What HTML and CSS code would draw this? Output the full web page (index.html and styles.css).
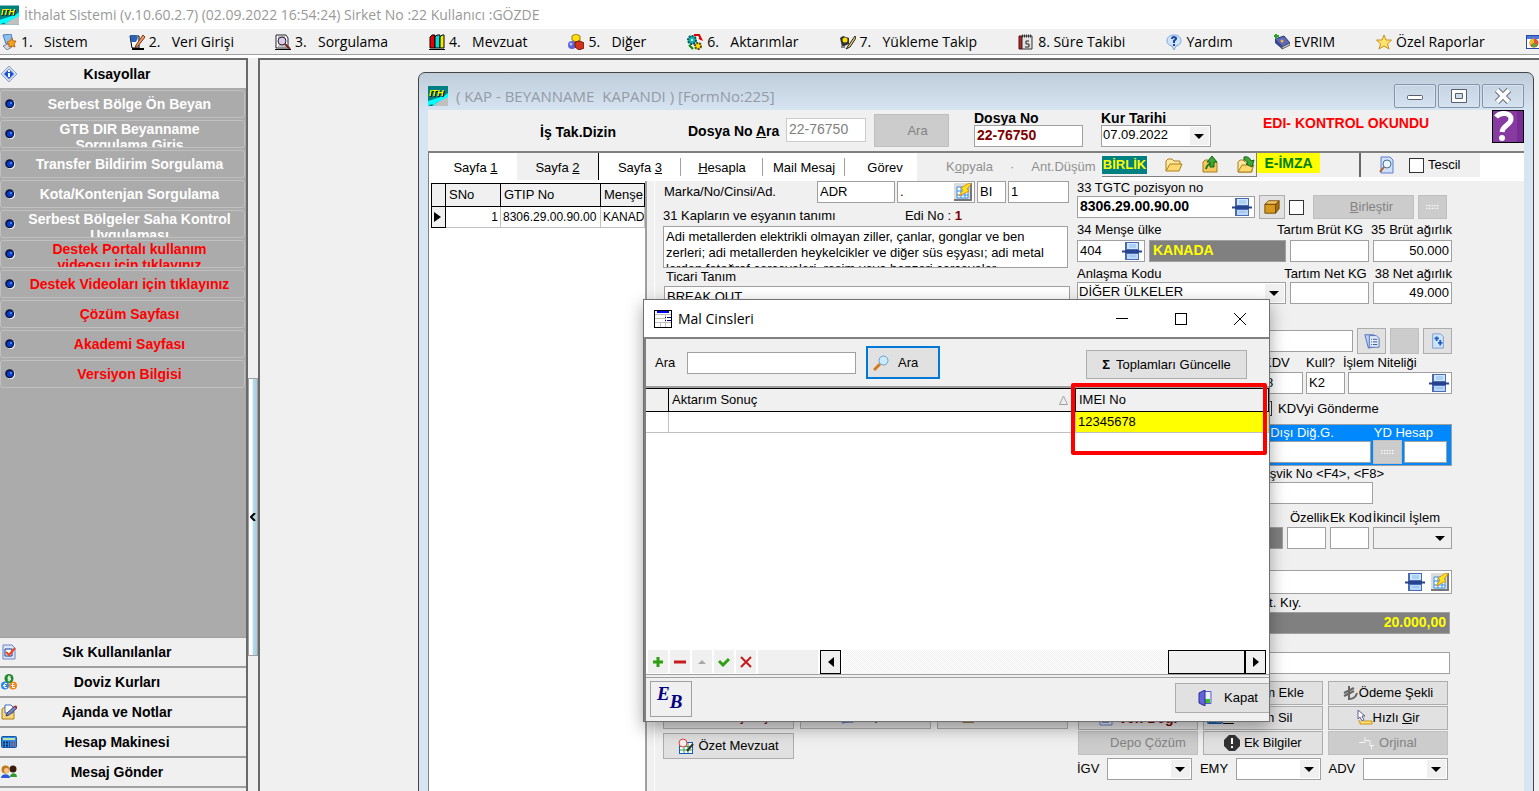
FILE: index.html
```html
<!DOCTYPE html>
<html lang="tr">
<head>
    <meta charset="UTF-8">
    <meta name="viewport" content="width=device-width, initial-scale=1.0">
    <title>İthalat Sistemi</title>
    <link rel="stylesheet" href="styles.css">
</head>
<body>
    <!-- Icon set -->
    <svg class="defs" width="0" height="0" aria-hidden="true">
        <symbol id="i-ith" viewBox="0 0 20 20">
            <rect width="20" height="20" fill="#008080"/>
            <path d="M4 20L20 9V20z" fill="#c0c0c0"/>
            <path d="M0 15L16 10L20 7V11L8 17L7 20L4 18L0 20z" fill="#0ff"/>
            <text x="2" y="11" font-family="Liberation Sans" font-size="9" font-weight="700" font-style="italic" fill="#000">ITH</text>
            <text x="1" y="10" font-family="Liberation Sans" font-size="9" font-weight="700" font-style="italic" fill="#ff0">ITH</text>
        </symbol>
        <symbol id="i-system" viewBox="0 0 16 16">
            <path d="M2 1l8-1 2 8-7 2z" fill="#8ec2ee" stroke="#4a7db8"/>
            <path d="M2 12l5-2 4 3-5 3z" fill="#d5d9e2" stroke="#7a8296"/>
            <path d="M11 4l1 3 3 0-2 3 1 3-3-1-3 1 0-3-2-2 3-1z" fill="#f9a020" stroke="#c06a10"/>
        </symbol>
        <symbol id="i-entry" viewBox="0 0 16 16">
            <path d="M1 2h9v12H3z" fill="#fff" stroke="#000"/>
            <path d="M1 1h6l2 3-2 4H2z" fill="#2a62b4"/>
            <path d="M3 15h12" stroke="#000" stroke-width="2"/>
            <path d="M14 1L7 11l-1 3 3-2 7-9z" fill="#e8a070" stroke="#803010"/>
        </symbol>
        <symbol id="i-query" viewBox="0 0 16 16">
            <path d="M1 1h10l2 3v10H1z" fill="#fff" stroke="#223"/>
            <path d="M3 3h7M3 12h8" stroke="#888"/>
            <circle cx="7" cy="7" r="4" fill="#dcc8ec" stroke="#222"/>
            <path d="M10 10l5 5" stroke="#722" stroke-width="2"/>
            <path d="M0 15.500h16" stroke="#000"/>
        </symbol>
        <symbol id="i-books" viewBox="0 0 16 16">
            <path d="M1 3l2-2h3v13H1z" fill="#e00" stroke="#000"/>
            <path d="M6 3l2-2h3v13H6z" fill="#0dd" stroke="#000"/>
            <path d="M11 3l2-2h2v13h-4z" fill="#ee0" stroke="#000"/>
            <path d="M0 15.500h16" stroke="#000"/>
        </symbol>
        <symbol id="i-shapes" viewBox="0 0 16 16">
            <path d="M8 0l4 2v4L8 8 4 6V2z" fill="#ffdf10" stroke="#a07800"/>
            <circle cx="4" cy="11" r="4" fill="#5763d8"/>
            <circle cx="3" cy="10" r="1.500" fill="#b7bcf8"/>
            <path d="M7 8l5-1 4 2v5l-5 2-4-3z" fill="#d33218" stroke="#761405"/>
        </symbol>
        <symbol id="i-gears" viewBox="0 0 16 16">
            <circle cx="5" cy="6" r="4" fill="#15b3b0" stroke="#055" stroke-width="2" stroke-dasharray="2 1"/>
            <circle cx="5" cy="6" r="1" fill="#fff"/>
            <circle cx="11" cy="12" r="3" fill="#ffe000" stroke="#554400" stroke-width="2" stroke-dasharray="2 1"/>
            <path d="M7 1h5l2 4-2-1" fill="none" stroke="#d00" stroke-width="2"/>
            <path d="M2 11l4 4" stroke="#080" stroke-width="2"/>
        </symbol>
        <symbol id="i-truck" viewBox="0 0 16 16">
            <path d="M0 4l3-2 6 2v6l-7 3z" fill="#333"/>
            <circle cx="5" cy="6" r="2.500" fill="#ffe200"/>
            <path d="M15 2L8 12l-2 3 4-2 6-9z" fill="#e5cf60" stroke="#222"/>
            <path d="M1 13h4" stroke="#888" stroke-width="2"/>
        </symbol>
        <symbol id="i-calendar" viewBox="0 0 16 16">
            <path d="M1 2h3v13H1z" fill="#b22" stroke="#511"/>
            <path d="M4 2h10v13H4z" fill="#e2e2e2" stroke="#333"/>
            <path d="M4 2h10" stroke="#333" stroke-width="3" stroke-dasharray="1 1"/>
            <path d="M11 7H8v3h3v3H7" fill="none" stroke="#222"/>
        </symbol>
        <symbol id="i-help" viewBox="0 0 16 16">
            <path d="M8 1c9 0 9 10 2 11l-2 4-2-4C-1 11-1 1 8 1z" fill="#cfe3fb" stroke="#7ca6de"/>
            <path d="M6 5c0-3 5-2 4 0L8 7v2M8 10v2" fill="none" stroke="#17459c" stroke-width="2"/>
        </symbol>
        <symbol id="i-book" viewBox="0 0 16 16">
            <path d="M1 5l9-3 6 7-8 4z" fill="#5b69b8" stroke="#2b3474"/>
            <path d="M1 5v4l7 6v-3z" fill="#39468e"/>
            <path d="M8 13v2l8-4V9z" fill="#e9e9f4" stroke="#555"/>
            <circle cx="8" cy="7" r="1.500" fill="#f9b233"/>
            <path d="M0 2h5M2 0v5" stroke="#2da12d" stroke-width="2"/>
        </symbol>
        <symbol id="i-star" viewBox="0 0 16 16">
            <path d="M8 1l2 5 5.500 0-4 4 1.500 5-5-3-5 3 1.500-5-4-4H6z" fill="#ffe36a" stroke="#c8901a"/>
        </symbol>
        <symbol id="i-chart" viewBox="0 0 16 16">
            <rect x="0.500" y="1.500" width="15" height="13" fill="#fff" stroke="#2746a8"/>
            <rect x="1" y="2" width="14" height="3" fill="#4e77d6"/>
            <circle cx="8" cy="9" r="4.500" fill="#e35532"/>
            <path d="M8 9V4.500A4.500 4.500 0 0 0 4 11z" fill="#e8c02a"/>
            <path d="M8 9l4 2a4.500 4.500 0 0 1-7 1z" fill="#5aa53c"/>
        </symbol>
        <symbol id="i-info" viewBox="0 0 16 16">
            <path d="M8 0l8 8-8 8-8-8z" fill="#cfdcf0" stroke="#8fa4c8"/>
            <path d="M8 3l5 5-5 5-5-5z" fill="#1d53c8"/>
            <path d="M8 4v2M8 7v4" stroke="#fff" stroke-width="2"/>
        </symbol>
        <symbol id="i-ball" viewBox="0 0 10 10">
            <circle cx="5.500" cy="5.500" r="4.500" fill="#fff"/>
            <circle cx="4.700" cy="4.700" r="4.500" fill="#0a1440"/>
            <circle cx="5" cy="5" r="3" fill="#0b3cc8"/>
            <circle cx="6" cy="4" r="1" fill="#52a0ff"/>
        </symbol>
        <symbol id="i-check" viewBox="0 0 16 16">
            <path d="M2 1h9l3 3v11H2z" fill="#dbe7fb" stroke="#6d82c4"/>
            <path d="M4 5h7v7H4z" fill="#fff" stroke="#12368e"/>
            <path d="M5 8l3 3 6-7" fill="none" stroke="#f0421c" stroke-width="2"/>
        </symbol>
        <symbol id="i-coins" viewBox="0 0 16 16">
            <circle cx="4" cy="11.500" r="4" fill="#2f86e4"/>
            <circle cx="12" cy="11.500" r="4" fill="#f28418"/>
            <circle cx="8" cy="4.500" r="4.500" fill="#1d8a28"/>
            <path d="M10 3H7v1.500h2.500V6H6.500M8 1.500V7.500" fill="none" stroke="#fff"/>
            <path d="M6 9.500H4L3 11v2l3 1M2 11.500h3M13 9.500h-1.500v4H14M10.500 11.500h3" fill="none" stroke="#fff"/>
        </symbol>
        <symbol id="i-notes" viewBox="0 0 16 16">
            <path d="M1 5l3-2h9v12H1z" fill="#f6d77a" stroke="#a87c18"/>
            <path d="M4 1h6l2 2v6H4z" fill="#fff" stroke="#3d6cc0"/>
            <path d="M5 12l1-3 8-7 2 2-8 7z" fill="#7b8ad0" stroke="#39406f"/>
            <path d="M14 2l2 2" stroke="#d02010" stroke-width="2"/>
        </symbol>
        <symbol id="i-calc" viewBox="0 0 16 16">
            <rect x="0.500" y="2.500" width="15" height="11" rx="1" fill="#2a8ce8" stroke="#1457a8"/>
            <path d="M2 5h12" stroke="#bfe4a8" stroke-width="2"/>
            <path d="M2 8.500h7M2 11.500h7" stroke="#0c2c60" stroke-width="2" stroke-dasharray="2 1"/>
            <path d="M10 8.500h4M10 11.500h4" stroke="#b5443c" stroke-width="2" stroke-dasharray="2 1"/>
        </symbol>
        <symbol id="i-people" viewBox="0 0 16 16">
            <circle cx="12" cy="5" r="3.500" fill="#3a1a0a"/>
            <path d="M9 13c0-5 7-5 7 0z" fill="#2c9a2c"/>
            <circle cx="4.500" cy="5.500" r="4" fill="#c07a1c"/>
            <circle cx="5.500" cy="6.500" r="2.500" fill="#f8c48c"/>
            <path d="M0 14c0-5 9-5 9 0z" fill="#2a58e0"/>
        </symbol>
        <symbol id="i-folder" viewBox="0 0 18 16">
            <path d="M1 14V4l2-2h4l2 2h6v3" fill="#ffe9a0" stroke="#a9801c"/>
            <path d="M1 14l4-7h12l-3 7z" fill="#ffd970" stroke="#a9801c"/>
        </symbol>
        <symbol id="i-folderup" viewBox="0 0 18 18">
            <path d="M2 16V6l2-2h3l2 2h7v10z" fill="#f6c75c" stroke="#a9801c"/>
            <path d="M5 13c1-4 2-5 5-5" fill="none" stroke="#187818" stroke-width="2"/>
            <path d="M6 6l5-6 5 6h-3v5H9V6z" fill="#3ca838" stroke="#0f6414"/>
        </symbol>
        <symbol id="i-folderin" viewBox="0 0 18 18">
            <path d="M1 16V6l2-2h3l2 2h7v10z" fill="#ffe9a0" stroke="#a9801c"/>
            <path d="M1 16l4-7h12l-3 7z" fill="#ffd970" stroke="#a9801c"/>
            <path d="M7 1c4-1 6 1 7 4l3-1-2 7-6-3 2-1c-1-2-2-3-4-3z" fill="#3ca838" stroke="#0f6414"/>
        </symbol>
        <symbol id="i-preview" viewBox="0 0 16 18">
            <path d="M2 1h9l3 3v13H2z" fill="#cfe0fb" stroke="#5d7ccc"/>
            <circle cx="8" cy="8" r="4" fill="#e6f7ff" stroke="#4a6a90"/>
            <path d="M5 11l-4 5" stroke="#b55c28" stroke-width="2"/>
        </symbol>
        <symbol id="i-lookup" viewBox="0 0 20 20">
            <rect x="3" y="1" width="14" height="18" fill="#4a6ab8"/>
            <rect x="5" y="2" width="11" height="6" fill="#cde8fc"/>
            <rect x="5" y="13" width="11" height="5" fill="#b9d8f8"/>
            <path d="M7 4h7M7 6h7M7 15h7" stroke="#8cb8ec"/>
            <path d="M0 10.500h20" stroke="#26438c" stroke-width="2"/>
            <rect x="3" y="9" width="14" height="3" fill="#26438c"/>
        </symbol>
        <symbol id="i-flash" viewBox="0 0 18 18">
            <rect width="18" height="18" fill="#dcdcdc"/>
            <path d="M17 0v17H0" fill="none" stroke="#777" stroke-width="2"/>
            <path d="M3 4h11v11H3z" fill="#fff" stroke="#2f8fe6"/>
            <path d="M3 8h11M3 12h11M7 4v11M11 4v11" stroke="#2f8fe6"/>
            <path d="M15 0l-8 5 2 2-4 6 10-5-2-2 4-5z" fill="#ffe31a" stroke="#e0901a"/>
        </symbol>
        <symbol id="i-box" viewBox="0 0 18 16">
            <path d="M1 5l4-4h12l-4 4z" fill="#f7c766" stroke="#6d4600"/>
            <path d="M1 5h12v10H1z" fill="#d99a1c" stroke="#6d4600"/>
            <path d="M13 5l4-4v9l-4 5z" fill="#a8700c" stroke="#6d4600"/>
        </symbol>
        <symbol id="i-list" viewBox="0 0 18 18">
            <path d="M1 2h10l2 3v10l-8 2z" fill="#bcd2f6" stroke="#4a68b4"/>
            <path d="M6 3h8l3 3v10H6z" fill="#e4effd" stroke="#4a68b4"/>
            <path d="M8 7h1M10 7h5M8 10h1M10 10h5M8 13h1M10 13h5" stroke="#2a4690"/>
        </symbol>
        <symbol id="i-plusdoc" viewBox="0 0 16 18">
            <path d="M2 1h9l3 3v13H2z" fill="#cfe4fb" stroke="#7796cc"/>
            <path d="M4 6h5M6.500 4v5M8 11h5M10.500 8v6" stroke="#1c62c0" stroke-width="2"/>
        </symbol>
        <symbol id="i-dots" viewBox="0 0 12 6">
            <path d="M1 2h10M1 4h10" stroke="#fff" stroke-dasharray="1 1"/>
        </symbol>
        <symbol id="i-lira" viewBox="0 0 16 16">
            <path d="M6 1v13c5 0 7-2 8-6M1 8l10-5M1 11l10-5" fill="none" stroke="#666" stroke-width="2"/>
        </symbol>
        <symbol id="i-cursor" viewBox="0 0 16 16">
            <path d="M1 11h2v3h12v-3H7" fill="#ffe36a" stroke="#c8901a"/>
            <path d="M1 0v9l2-2 2 4 2-1-2-4h3z" fill="#fff" stroke="#5e5c98"/>
        </symbol>
        <symbol id="i-alert" viewBox="0 0 16 16">
            <path d="M5 0h6l5 5v6l-5 5H5l-5-5V5z" fill="#333"/>
            <path d="M8 3v6M8 11v2" stroke="#fff" stroke-width="2"/>
        </symbol>
        <symbol id="i-route" viewBox="0 0 16 16">
            <path d="M0 7.500h6V2M7 5.500h4v5h4M12.500 10v4" fill="none" stroke="#f4f4f4"/>
        </symbol>
        <symbol id="i-digest" viewBox="0 0 16 16">
            <rect x="1.500" y="4.500" width="13" height="11" fill="#fff" stroke="#1559c4"/>
            <path d="M2 8.500h12M2 12h12M6 5v10M10 5v10" stroke="#2ca23c"/>
            <circle cx="5" cy="5" r="4" fill="#fdeeee" stroke="#e04444"/>
            <path d="M9 13l6-7" stroke="#333" stroke-width="2"/>
        </symbol>
        <symbol id="i-grid" viewBox="0 0 18 18">
            <rect x="0.500" y="0.500" width="17" height="17" fill="#fff" stroke="#000"/>
            <rect x="3" y="1" width="12" height="2" fill="#00f"/>
            <path d="M1 4.500h16M1 8.500h10M1 12.500h16M6.500 13v4M11.500 4v13" stroke="#c0c0c0"/>
            <path d="M11 7.500h1M13 7.500h4M11 10.500h1M13 10.500h4" stroke="#000080"/>
        </symbol>
        <symbol id="i-search" viewBox="0 0 16 16">
            <path d="M1 15l6-6" stroke="#d8781c" stroke-width="3"/>
            <circle cx="10.500" cy="5.500" r="4.500" fill="#c8ecfc" stroke="#6a9cc8"/>
        </symbol>
        <symbol id="i-door" viewBox="0 0 14 16">
            <path d="M5 1.500h8v12H5z" fill="#e8f0ff" stroke="#5a5ad0"/>
            <path d="M7 9h5v4H7z" fill="#38c028"/>
            <path d="M1 3l6-3v16l-6-3z" fill="#6262dc" stroke="#2c2c90"/>
        </symbol>
    </svg>

    <header class="app-title">
        <svg width="19" height="20"><use href="#i-ith"/></svg>
        <span>İthalat Sistemi (v.10.60.2.7) (02.09.2022 16:54:24) Sirket No :22 Kullanıcı :GÖZDE</span>
    </header>

    <nav class="menu">
        <button><svg><use href="#i-system"/></svg><span class="no">1.</span>Sistem</button>
        <button><svg><use href="#i-entry"/></svg><span class="no">2.</span>Veri Girişi</button>
        <button><svg><use href="#i-query"/></svg><span class="no">3.</span>Sorgulama</button>
        <button><svg><use href="#i-books"/></svg><span class="no">4.</span>Mevzuat</button>
        <button><svg><use href="#i-shapes"/></svg><span class="no">5.</span>Diğer</button>
        <button><svg><use href="#i-gears"/></svg><span class="no">6.</span>Aktarımlar</button>
        <button><svg><use href="#i-truck"/></svg><span class="no">7.</span>Yükleme Takip</button>
        <button><svg><use href="#i-calendar"/></svg>8. Süre Takibi</button>
        <button><svg><use href="#i-help"/></svg>Yardım</button>
        <button><svg><use href="#i-book"/></svg>EVRIM</button>
        <button><svg><use href="#i-star"/></svg>Özel Raporlar</button>
        <button aria-label="Grafik"><svg><use href="#i-chart"/></svg></button>
    </nav>

    <div class="workspace">
        <aside class="sidebar">
            <button class="group first"><svg><use href="#i-info"/></svg><span>Kısayollar</span></button>
            <div class="shortcuts">
                <button><svg><use href="#i-ball"/></svg><span>Serbest Bölge Ön Beyan</span></button>
                <button><svg><use href="#i-ball"/></svg><span>GTB DIR Beyanname Sorgulama Giriş</span></button>
                <button><svg><use href="#i-ball"/></svg><span>Transfer Bildirim Sorgulama</span></button>
                <button><svg><use href="#i-ball"/></svg><span>Kota/Kontenjan Sorgulama</span></button>
                <button><svg><use href="#i-ball"/></svg><span>Serbest Bölgeler Saha Kontrol Uygulaması</span></button>
                <button class="red"><svg><use href="#i-ball"/></svg><span>Destek Portalı kullanım videosu için tıklayınız</span></button>
                <button class="red"><svg><use href="#i-ball"/></svg><span>Destek Videoları için tıklayınız</span></button>
                <button class="red"><svg><use href="#i-ball"/></svg><span>Çözüm Sayfası</span></button>
                <button class="red"><svg><use href="#i-ball"/></svg><span>Akademi Sayfası</span></button>
                <button class="red"><svg><use href="#i-ball"/></svg><span>Versiyon Bilgisi</span></button>
            </div>
            <button class="group"><svg><use href="#i-check"/></svg><span>Sık Kullanılanlar</span></button>
            <button class="group"><svg><use href="#i-coins"/></svg><span>Doviz Kurları</span></button>
            <button class="group"><svg><use href="#i-notes"/></svg><span>Ajanda ve Notlar</span></button>
            <button class="group"><svg><use href="#i-calc"/></svg><span>Hesap Makinesi</span></button>
            <button class="group"><svg><use href="#i-people"/></svg><span>Mesaj Gönder</span></button>
            <div class="rest"></div>
        </aside>
        <div class="splitter"><button aria-label="Daralt"><svg width="6" height="8" viewBox="0 0 6 8"><path d="M5 0L1 4l4 4" fill="none" stroke="#000" stroke-width="2"/></svg></button></div>

        <main class="desktop">
            <!-- Declaration window -->
            <section class="window">
                <div class="window-head">
                    <svg width="20" height="20"><use href="#i-ith"/></svg>
                    <h1>( KAP - BEYANNAME&nbsp; KAPANDI ) [FormNo:225]</h1>
                    <button aria-label="Simge durumu"><svg width="18" height="18"><rect x="1.500" y="8.500" width="15" height="4" rx="1" fill="#fff" stroke="#555f70"/></svg></button>
                    <button aria-label="Büyüt"><svg width="18" height="18"><path d="M1.500 2.500h15v13h-15z M5.500 6.500h7v5h-7z" fill="#fff" fill-rule="evenodd" stroke="#555f70"/></svg></button>
                    <button aria-label="Pencereyi kapat"><svg width="18" height="18"><path d="M3 3l12 12M15 3L3 15" stroke="#555f70" stroke-width="6"/><path d="M3 3l12 12M15 3L3 15" stroke="#fff" stroke-width="4"/></svg></button>
                </div>
                <div class="window-body">
                    <div class="file-bar">
                        <b class="is-tak">İş Tak.Dizin</b>
                        <label class="find-label" for="find">Dosya No <u>A</u>ra</label>
                        <input class="find" id="find" value="22-76750" disabled>
                        <button class="find-btn" disabled>Ara</button>
                        <div class="stack dosya"><label for="dosya">Dosya No</label><input id="dosya" value="22-76750"></div>
                        <div class="stack kur"><label for="kur">Kur Tarihi</label><span class="select"><select id="kur"><option>07.09.2022</option></select></span></div>
                        <b class="edi">EDI- KONTROL OKUNDU</b>
                        <button class="help" aria-label="Yardım"><svg width="30" height="31" viewBox="0 0 30 31"><path d="M24 0h6v31h-6z" fill="#7a2a94"/><path d="M3 6c4-5 15-5 15 2 0 6-8 6-9 13" fill="none" stroke="#fff" stroke-width="5"/><circle cx="9" cy="27" r="3" fill="#fff"/></svg></button>
                    </div>

                    <div class="tabs">
                        <button class="tab">Sayfa <u>1</u></button>
                        <button class="tab active">Sayfa <u>2</u></button>
                        <button class="tab">Sayfa <u>3</u></button>
                        <button class="tab"><u>H</u>esapla</button>
                        <button class="tab">Mail Mesaj</button>
                        <button class="tab last">Görev</button>
                        <div class="tools-off"><button disabled>K<u>o</u>pyala</button><span>·</span><button disabled>Ant.Düşüm</button></div>
                        <div class="tools">
                            <button class="birlik">BİRLİK</button>
                            <button aria-label="Aç"><svg width="18" height="16"><use href="#i-folder"/></svg></button>
                            <button aria-label="Dışarı"><svg width="18" height="18"><use href="#i-folderup"/></svg></button>
                            <button aria-label="İçeri"><svg width="18" height="18"><use href="#i-folderin"/></svg></button>
                        </div>
                        <div class="imza"><button>E-İMZA</button></div>
                        <div class="tescil">
                            <svg width="16" height="18"><use href="#i-preview"/></svg>
                            <label><input type="checkbox">Tescil</label>
                        </div>
                    </div>

                    <div class="page">
                        <div class="items">
                            <table>
                                <thead><tr><th class="mark"></th><th class="sno">SNo</th><th class="gtip">GTIP No</th><th>Menşe</th></tr></thead>
                                <tbody><tr><td class="mark"><svg width="8" height="10"><path d="M0 0l7 5-7 5z"/></svg></td><td class="num">1</td><td>8306.29.00.90.00</td><td>KANADA</td></tr></tbody>
                            </table>
                        </div>

                        <div class="form">
                            <div class="goods">
                                <div class="row marka">
                                    <label for="marka">Marka/No/Cinsi/Ad.</label>
                                    <input class="w78" id="marka" value="ADR">
                                    <span class="field w78"><input aria-label="No" value="."><button aria-label="Seç"><svg width="18" height="18"><use href="#i-flash"/></svg></button></span>
                                    <input class="w29" aria-label="Cins" value="BI">
                                    <input class="grow" aria-label="Adet" value="1">
                                </div>
                                <div class="row lab edino"><label for="tanim">31 Kapların ve eşyanın tanımı</label><span>Edi No : <b>1</b></span></div>
                                <textarea id="tanim">Adi metallerden elektrikli olmayan ziller, çanlar, gonglar ve ben
zerleri; adi metallerden heykelcikler ve diğer süs eşyası; adi metal
lerden fotoğraf çerçeveleri, resim veya benzeri çerçeveler</textarea>
                                <label class="row lab18 inset" for="ticari">Ticari Tanım</label>
                                <input class="full" id="ticari" value="BREAK OUT">
                                <div class="goods-buttons">
                                    <button class="strong"><svg><use href="#i-calc"/></svg>Parite Çalıştır</button>
                                    <button><svg><use href="#i-list"/></svg>Rapor</button>
                                    <button><svg><use href="#i-box"/></svg>ALT Notlar</button>
                                    <button><svg><use href="#i-digest"/></svg>Özet Mevzuat</button>
                                </div>
                            </div>

                            <div class="tariff">
                                <label class="row clipped" for="gtc">33 TGTC pozisyon no</label>
                                <div class="row tall">
                                    <span class="field w178 bold"><input id="gtc" value="8306.29.00.90.00"><button aria-label="Ara"><svg width="20" height="20"><use href="#i-lookup"/></svg></button></span>
                                    <button class="btn w26" aria-label="Kutu"><svg width="18" height="16"><use href="#i-box"/></svg></button>
                                    <input class="tick" type="checkbox" aria-label="Birleştir seç">
                                    <button class="btn birlestir" disabled><u>B</u>irleştir</button>
                                    <button class="btn w29" disabled aria-label="Diğer"><svg width="12" height="6"><use href="#i-dots"/></svg></button>
                                </div>
                                <div class="row lab"><label for="mense">34 Menşe ülke</label><label class="push brut" for="tb">Tartım Brüt KG</label><label for="ba">35 Brüt ağırlık</label></div>
                                <div class="row">
                                    <span class="field w68"><input id="mense" value="404"><button aria-label="Ara"><svg width="20" height="20"><use href="#i-lookup"/></svg></button></span>
                                    <output class="dark grow">KANADA</output>
                                    <input class="w79" id="tb"><input class="w79 num" id="ba" value="50.000">
                                </div>
                                <div class="row low"><label for="anlasma">Anlaşma Kodu</label><label class="push brut" for="tn">Tartım Net KG</label><label for="na">38 Net ağırlık</label></div>
                                <div class="row">
                                    <span class="select grow"><select id="anlasma"><option>DİĞER ÜLKELER</option></select></span>
                                    <input class="w79" id="tn"><input class="w79 num" id="na" value="49.000">
                                </div>
                                <div class="row docs">
                                    <input class="grow" aria-label="Belge">
                                    <button class="btn w29" aria-label="Liste"><svg width="18" height="18"><use href="#i-list"/></svg></button>
                                    <button class="btn w29" disabled aria-label="Boş"></button>
                                    <button class="btn w29" aria-label="Ekle"><svg width="16" height="18"><use href="#i-plusdoc"/></svg></button>
                                </div>
                                <div class="row lab18 kdv-labels"><label for="kdv">KDV</label><label for="kull">Kull?</label><label for="nitelik">İşlem Niteliği</label></div>
                                <div class="row kdv-row">
                                    <input class="grow kdv" id="kdv" value="8">
                                    <input class="w39" id="kull" value="K2">
                                    <span class="field w104"><input id="nitelik"><button aria-label="Ara"><svg width="20" height="20"><use href="#i-lookup"/></svg></button></span>
                                </div>
                                <div class="row kdv-off"><label><input type="checkbox">KDVyi Gönderme</label></div>
                                <div class="abroad">
                                    <div class="row lab16"><label for="dig">Yurt Dışı Diğ.G.</label><label for="yd">YD Hesap</label></div>
                                    <div class="row"><input class="grow" id="dig"><button class="btn w29" disabled aria-label="Diğer"><svg width="12" height="6"><use href="#i-dots"/></svg></button><input class="w43" id="yd"></div>
                                </div>
                                <div class="row lab16 tesvik-lab"><label for="tesvik">Teşvik No &lt;F4&gt;, &lt;F8&gt;</label></div>
                                <div class="row tesvik"><input class="grow" id="tesvik"></div>
                                <div class="row codes"><label class="push" for="oz">Özellik</label><label for="ek">Ek Kod</label><label for="ikincil">İkincil İşlem</label></div>
                                <div class="row">
                                    <output class="dark grow"></output>
                                    <input class="w39" id="oz"><input class="w39" id="ek">
                                    <span class="select off w79"><select id="ikincil"><option></option></select></span>
                                </div>
                                <div class="row tall istat"><span class="field grow"><input aria-label="İstatistik"><button aria-label="Ara"><svg width="20" height="20"><use href="#i-lookup"/></svg></button><button aria-label="Hesapla"><svg width="18" height="18"><use href="#i-flash"/></svg></button></span></div>
                                <div class="row lab18 kiy"><span>İst. Kıy.</span></div>
                                <div class="row short"><output class="dark grow num">20.000,00</output></div>
                                <div class="row short note"><input class="grow" aria-label="Not"></div>
                                <div class="actions">
                                    <button class="btn">Kopya</button>
                                    <button class="btn"><svg><use href="#i-list"/></svg>Kalem Ekle</button>
                                    <button class="btn"><svg><use href="#i-lira"/></svg>Ödeme Şekli</button>
                                    <button class="btn strong"><svg><use href="#i-check"/></svg>&nbsp;Ver. Değ.</button>
                                    <button class="btn start"><svg><use href="#i-calc"/></svg><span><u>m</u>.Kalem Sil</span></button>
                                    <button class="btn"><svg><use href="#i-cursor"/></svg><span>Hızlı <u>G</u>ir</span></button>
                                    <button class="btn depo" disabled>Depo Çözüm</button>
                                    <button class="btn"><svg><use href="#i-alert"/></svg>&nbsp;Ek Bilgiler</button>
                                    <button class="btn" disabled><svg><use href="#i-route"/></svg>&nbsp;Orjinal</button>
                                </div>
                                <div class="row short taxes">
                                    <label for="igv">İGV</label><span class="select"><select id="igv"><option></option></select></span>
                                    <label for="emy">EMY</label><span class="select"><select id="emy"><option></option></select></span>
                                    <label for="adv">ADV</label><span class="select"><select id="adv"><option></option></select></span>
                                </div>
                                <div class="row short flags">
                                    <label><input type="checkbox">Sanayi</label>
                                    <label><input type="checkbox">İade Al</label>
                                    <label><input type="checkbox">Özel</label>
                                    <label><input type="checkbox">Muaf</label>
                                </div>
                            </div>
                        </div>
                    </div>
                </div>
            </section>
        </main>
    </div>

    <!-- Goods types dialog -->
    <section class="dialog" role="dialog" aria-labelledby="dialog-title">
        <div class="dialog-head">
            <svg width="18" height="18"><use href="#i-grid"/></svg>
            <h2 id="dialog-title">Mal Cinsleri</h2>
            <button aria-label="Simge durumu"><svg width="14" height="14"><path d="M1 6.500h12" stroke="#000"/></svg></button>
            <button aria-label="Büyüt"><svg width="14" height="14"><rect x="1.500" y="1.500" width="11" height="11" fill="none" stroke="#000"/></svg></button>
            <button aria-label="Kapat"><svg width="14" height="14"><path d="M1 1l12 12M13 1L1 13" stroke="#000"/></svg></button>
        </div>
        <div class="dialog-body">
            <div class="search-bar">
                <label for="ara">Ara</label>
                <input id="ara">
                <button class="btn search"><svg><use href="#i-search"/></svg>Ara</button>
                <button class="btn totals"><b>Σ</b>Toplamları Güncelle</button>
            </div>
            <table class="results">
                <thead><tr><th class="mark"></th><th><div class="sorted">Aktarım Sonuç <svg width="9" height="10"><path d="M4.500 1L8.500 9.500h-8z" fill="none" stroke="#a0a0a0"/></svg></div></th><th class="imei">IMEI No</th></tr></thead>
                <tbody><tr><td></td><td></td><td class="hit">12345678</td></tr></tbody>
            </table>
            <div class="blank"></div>
            <div class="navigator">
                <button aria-label="Ekle"><svg width="12" height="12"><path d="M6 1v10M1 6h10" stroke="#2ca010" stroke-width="3"/></svg></button>
                <button aria-label="Sil"><svg width="12" height="12"><path d="M0 6h12" stroke="#c81c1c" stroke-width="3"/></svg></button>
                <button aria-label="Düzenle"><svg width="12" height="12"><path d="M2 8l4-4 4 4z" fill="#a8a8a8"/></svg></button>
                <button aria-label="Onayla"><svg width="12" height="12"><path d="M1 5l4 4 6-6" fill="none" stroke="#2ca010" stroke-width="3"/></svg></button>
                <button aria-label="Vazgeç"><svg width="12" height="12"><path d="M1 1l10 10M11 1L1 11" stroke="#c81c1c" stroke-width="2"/></svg></button>
                <div class="filler"></div>
                <button class="scroll" aria-label="Sola"><svg width="8" height="12"><path d="M7 1v10L1 6z"/></svg></button>
                <div class="track"><div class="thumb"></div></div>
                <button class="scroll" aria-label="Sağa"><svg width="8" height="12"><path d="M1 1v10l6-5z"/></svg></button>
            </div>
            <div class="dialog-foot">
                <div class="eb"><i>E</i><i class="b">B</i></div>
                <button class="btn close"><svg width="14" height="16"><use href="#i-door"/></svg>Kapat</button>
            </div>
        </div>
        <div class="highlight"></div>
    </section>
</body>
</html>
```
FILE: styles.css
```css
* {
    box-sizing: border-box;
}

body {
    display: flex;
    flex-direction: column;
    position: relative;
    height: 100vh;
    margin: 0;
    overflow: hidden;
    background-color: #f0f0f0;
    color: #000;
    font: 13px/16px "Liberation Sans", Arial, sans-serif;
}

button, input, select, textarea {
    margin: 0;
    padding: 0;
    border: 0;
    border-radius: 0;
    background: none;
    color: inherit;
    font: inherit;
}

svg {
    display: block;
    flex: none;
}

.defs {
    position: absolute;
}

/* Application title and menu */
.app-title {
    display: flex;
    align-items: center;
    gap: 5px;
    flex: none;
    height: 29px;
    background-color: #fff;
    color: #999;
    font: 14px/20px "Open Sans", "Noto Sans", sans-serif;
    white-space: nowrap;
}

.menu {
    display: flex;
    gap: 41px;
    flex: none;
    height: 26px;
    padding-left: 1px;
    border-bottom: 1px solid #a0a0a0;
    font: 14px/20px "Open Sans", "Noto Sans", sans-serif;
    white-space: nowrap;
}

.menu button {
    display: flex;
    align-items: center;
    flex: none;
    gap: 4px;
}

.menu svg, .group svg, .btn svg, .goods-buttons svg {
    width: 16px;
    height: 16px;
}

.no {
    width: 19px;
    text-align: left;
}

.workspace {
    display: flex;
    flex: 1;
    min-height: 0;
    padding-top: 3px;
    background-color: #fff;
}

/* Sidebar */
.sidebar {
    display: flex;
    flex-direction: column;
    flex: none;
    width: 248px;
    border-top: 2px solid #696969;
    border-right: 2px solid #696969;
    background-color: #a0a0a0;
    font-size: 14px;
    font-weight: 700;
}

.group {
    display: flex;
    align-items: center;
    flex: none;
    height: 28px;
    margin-bottom: 2px;
    padding-left: 1px;
    background-color: #f0f0f0;
}

.group span {
    flex: 1;
    padding-right: 29px;
    text-align: center;
}

.first {
    margin-bottom: 0;
}

.rest {
    flex: none;
    height: 3px;
    background-color: #f0f0f0;
}

.shortcuts {
    display: flex;
    flex-direction: column;
    gap: 2px;
    flex: 1;
    min-height: 0;
    margin-bottom: 1px;
    padding: 2px 1px 0 0;
    overflow: hidden;
    background-color: #ababab;
    color: #fff;
}

.shortcuts button {
    display: flex;
    align-items: center;
    flex: none;
    height: 28px;
    padding-left: 4px;
    border: 1px solid #c0c0c0;
    border-radius: 3px;
}

.shortcuts svg {
    width: 10px;
    height: 10px;
}

.shortcuts span {
    flex: 1;
    max-height: 26px;
    padding: 0 10px;
    overflow: hidden;
    text-align: center;
}

.shortcuts .red {
    color: #f00;
}

.splitter {
    flex: none;
    width: 10px;
    padding-top: 320px;
    background-color: #f0f0f0;
}

.splitter button {
    display: grid;
    place-items: center;
    width: 10px;
    height: 278px;
    border: 1px solid #a0a0a0;
    background: linear-gradient(90deg, #fff 40%, #b8dcec 50%, #a8ccdc);
}

.desktop {
    position: relative;
    flex: 1;
    min-width: 0;
    overflow: hidden;
    border-top: 2px solid #696969;
    border-left: 2px solid #696969;
    background-color: #f0f0f0;
}

/* Child window */
.window {
    position: absolute;
    top: 12px;
    right: 5px;
    bottom: -20px;
    left: 158px;
    display: flex;
    flex-direction: column;
    padding: 0 9px;
    border: 1px solid #444;
    border-radius: 7px 7px 0 0;
    background: linear-gradient(#bfcddb, #d7e4f2 38px);
}

.window-head {
    display: flex;
    align-items: center;
    gap: 2px;
    flex: none;
    height: 37px;
    padding-top: 8px;
}

.window-head h1 {
    flex: 1;
    margin: 0 0 0 6px;
    color: #939ba5;
    font: 15px/20px "Open Sans", "Noto Sans", sans-serif;
}

.window-head button {
    display: grid;
    place-items: center;
    width: 42px;
    height: 24px;
    border: 1px solid #8394ab;
    border-radius: 2px;
    box-shadow: inset 0 0 0 1px #d8e3ef;
}

.window-body {
    display: flex;
    flex-direction: column;
    flex: 1;
    min-height: 0;
    background-color: #f0f0f0;
}

.file-bar {
    display: flex;
    align-items: flex-start;
    flex: none;
    height: 43px;
    border-bottom: 2px solid #808080;
    font-size: 14px;
    font-weight: 700;
    white-space: nowrap;
}

input, .field, .select, output {
    height: 22px;
    border: 1px solid #a0a0a0;
    background-color: #fff;
}

input {
    min-width: 0;
    padding: 0 2px 2px;
}

.is-tak {
    width: 148px;
    margin: 14px 0 0 112px;
}

.find-label {
    width: 98px;
    margin-top: 13px;
}

.find {
    width: 80px;
    height: 24px;
    margin-top: 8px;
    border-color: #ccc;
    color: #808080;
    font-weight: 400;
}

.find-btn {
    width: 75px;
    height: 33px;
    margin: 4px 25px 0 8px;
    padding-left: 12px;
    border: 1px solid #bfbfbf;
    background-color: #ccc;
    color: #838383;
    font-size: 13px;
    font-weight: 400;
}

.stack {
    display: flex;
    flex-direction: column;
}

.stack label {
    height: 15px;
}

.dosya {
    width: 109px;
    margin-right: 18px;
}

.dosya input {
    color: #800000;
    font-weight: 700;
}

.kur {
    width: 110px;
}

.kur .select {
    font-size: 13px;
    font-weight: 400;
}

.edi {
    margin: 5px auto 0 52px;
    color: #f00;
}

.help {
    width: 32px;
    height: 33px;
    border: 1px solid #000;
    background-color: #873aa0;
}

/* Drop-downs */
.select {
    position: relative;
    display: block;
    min-width: 0;
}

.select select {
    width: 100%;
    height: 20px;
    padding: 0 0 2px 1px;
    appearance: none;
}

.select::after {
    content: "";
    position: absolute;
    top: 1px;
    right: 1px;
    width: 19px;
    height: 18px;
    background: #f0f0f0;
    pointer-events: none;
}

.select::before {
    content: "";
    position: absolute;
    z-index: 1;
    top: 8px;
    right: 6px;
    border: 5px solid transparent;
    border-top-color: #000;
    border-bottom: 0;
    pointer-events: none;
}

.select.off {
    background-color: #f0f0f0;
}

/* Page tabs */
.tabs {
    display: flex;
    align-items: flex-start;
    flex: none;
    height: 28px;
    padding: 0 0 0 1px;
    border-left: 1px solid #808080;
    background-color: #fff;
    white-space: nowrap;
}

.tab {
    width: 82px;
    height: 27px;
    padding-top: 3px;
    background: linear-gradient(#a0a0a0, #a0a0a0) right 5px / 1px 18px no-repeat;
}

.tab:first-child {
    width: 87px;
    padding-left: 4px;
    background: none;
}

.active {
    border-right: 1px solid #000;
    background: #f0f0f0;
}

.last {
    width: 72px;
    padding-left: 8px;
    background: none;
}

.tools-off {
    display: flex;
    align-items: center;
    gap: 17px;
    width: 185px;
    height: 28px;
    padding-left: 29px;
    background-color: #f0f0f0;
    color: #909090;
}

.tools {
    display: flex;
    align-items: center;
    gap: 18px;
    width: 155px;
    height: 24px;
    border-right: 1px solid #808080;
    border-bottom: 1px solid #808080;
    background-color: #f0f0f0;
}

.birlik {
    width: 45px;
    height: 18px;
    background-color: #008080;
    color: #ff0;
    font-weight: 700;
}

.imza {
    width: 104px;
    height: 24px;
    border-right: 2px solid #696969;
    background-color: #f0f0f0;
}

.imza button {
    width: 63px;
    height: 20px;
    background-color: #ff0;
    color: #008000;
    font-size: 14px;
    font-weight: 700;
}

.tescil {
    display: flex;
    align-items: center;
    gap: 14px;
    width: 119px;
    height: 24px;
    padding-left: 18px;
    background-color: #f0f0f0;
}

.tescil label {
    display: flex;
    align-items: center;
    gap: 4px;
}

input[type="checkbox"] {
    flex: none;
    width: 15px;
    height: 15px;
    border: 1px solid #333;
    background-color: #fff;
    appearance: none;
}

/* Items grid */
.page {
    display: flex;
    flex: 1;
    min-height: 0;
}

table {
    width: 100%;
    border-collapse: separate;
    border-spacing: 0;
    table-layout: fixed;
    white-space: nowrap;
}

th {
    height: 23px;
    padding: 0 3px;
    overflow: hidden;
    border-right: 1px solid #000;
    border-bottom: 1px solid #000;
    background-color: #f0f0f0;
    font-weight: 400;
    text-align: left;
}

td {
    height: 21px;
    padding: 0 2px;
    overflow: hidden;
    border-right: 1px solid #c0c0c0;
    border-bottom: 1px solid #c0c0c0;
}

.items {
    flex: none;
    width: 219px;
    padding: 2px 0 0 2px;
    border-right: 2px solid #a0a0a0;
    border-left: 1px solid #808080;
    background-color: #fff;
}

.items table {
    border-top: 1px solid #000;
    border-left: 1px solid #000;
}

.items td {
    font-size: 12px;
}

.items .mark {
    width: 14px;
    border-color: #000;
    background-color: #f0f0f0;
}

.sno {
    width: 55px;
}

.gtip {
    width: 100px;
}

.num {
    text-align: right;
}

/* Form */
.form {
    display: flex;
    align-items: flex-start;
    flex: 1;
    gap: 7px;
    min-width: 0;
    margin-left: 7px;
    padding-left: 8px;
    border-left: 1px solid #fff;
    white-space: nowrap;
}

.goods {
    flex: none;
    width: 407px;
}

.tariff {
    flex: none;
    width: 375px;
}

.row {
    display: flex;
    align-items: center;
    gap: 4px;
    height: 22px;
}

.tall {
    height: 24px;
}

.lab {
    height: 21px;
}

.lab18 {
    height: 18px;
}

.lab16 {
    height: 16px;
}

.low {
    height: 20px;
    padding-top: 4px;
}

.push {
    margin-left: auto;
}

.grow {
    flex: 1;
}

.w26 { width: 26px; }
.w29 { width: 29px; }
.w39 { width: 39px; }
.w43 { width: 43px; }
.w68 { width: 68px; }
.w78 { width: 78px; }
.w79 { width: 79px; }
.w104 { width: 104px; }
.w178 { width: 178px; }

.marka {
    gap: 2px;
    padding-right: 1px;
}

.marka label {
    width: 152px;
    padding-left: 1px;
}

.field {
    display: flex;
    align-items: center;
    min-width: 0;
    padding-right: 2px;
}

.field input {
    flex: 1;
    height: 20px;
    border: 0;
}

.bold, .strong {
    font-size: 14px;
    font-weight: 700;
}

.strong {
    color: #800000;
}

.edino {
    justify-content: space-between;
    padding: 4px 108px 0 0;
}

.edino b {
    color: #800000;
}

.goods textarea {
    display: block;
    width: 405px;
    height: 42px;
    margin-top: 2px;
    padding: 2px;
    overflow: hidden;
    border: 1px solid #a0a0a0;
    background-color: #fff;
    resize: none;
    white-space: pre;
}

.inset {
    padding-left: 3px;
}

.full {
    display: block;
    width: 406px;
    margin-left: 1px;
}

.goods-buttons {
    display: flex;
    flex-wrap: wrap;
    gap: 4px 6px;
    margin-top: 395px;
}

.goods-buttons button {
    display: flex;
    align-items: center;
    justify-content: center;
    gap: 4px;
    width: 131px;
    height: 26px;
    border: 1px solid #adadad;
    background-color: #e1e1e1;
}

.clipped {
    height: 14px;
    overflow: hidden;
}

.btn {
    display: flex;
    align-items: center;
    justify-content: center;
    flex: none;
    height: 24px;
    border: 1px solid #adadad;
    background-color: #e1e1e1;
}

.btn:disabled {
    border-color: #bfbfbf;
    background-color: #ccc;
    color: #838383;
}

.birlestir {
    width: 101px;
    margin-left: 5px;
    padding-left: 16px;
}

.brut {
    margin-right: 4px;
}

.dark {
    padding: 1px 3px 0;
    background-color: #808080;
    color: #ff0;
    font-size: 14px;
    font-weight: 700;
}

.docs {
    height: 26px;
    margin-top: 24px;
}

.docs .btn {
    height: 26px;
}

.kdv-labels {
    gap: 8px;
    padding-left: 186px;
}

.kdv-labels label:first-child {
    width: 35px;
}

.kdv-row {
    gap: 3px;
}

.kdv {
    padding-left: 188px;
}

.kdv-off {
    height: 30px;
    padding-left: 180px;
}

.kdv-off label {
    display: flex;
    gap: 6px;
}

.abroad {
    height: 42px;
    padding: 0 4px 0 0;
    border: 1px solid #a0a0a0;
    background-color: #08f;
    color: #fff;
}

.abroad .row {
    gap: 2px;
    color: #000;
}

.abroad .lab16 {
    gap: 40px;
    justify-content: flex-end;
    padding-right: 14px;
    color: #fff;
}

.tesvik-lab {
    justify-content: flex-end;
    padding-right: 68px;
}

.tesvik {
    padding-right: 79px;
}

.codes {
    height: 23px;
    gap: 1px;
    padding: 4px 12px 0 0;
}

.istat {
    margin-top: 21px;
}

.istat .field {
    height: 24px;
    gap: 6px;
}

.kiy {
    padding-left: 182px;
}

.short {
    padding-right: 2px;
}

.note {
    margin-top: 18px;
}

.actions {
    display: grid;
    grid-template-columns: repeat(3, 120px);
    gap: 1px 5px;
    margin: 7px 0 3px 1px;
}

.start {
    justify-content: flex-start;
    padding-left: 3px;
}

.depo {
    padding-left: 20px;
}

.taxes {
    gap: 0;
    justify-content: space-between;
    padding-right: 4px;
}

.taxes .select {
    width: 85px;
}

.flags {
    gap: 34px;
    margin-top: 9px;
}

.flags label {
    display: flex;
    gap: 4px;
}

/* Dialog */
.dialog {
    position: absolute;
    top: 299px;
    left: 643px;
    width: 627px;
    height: 423px;
    display: flex;
    flex-direction: column;
    border: 1px solid #707070;
    background-color: #f0f0f0;
    box-shadow: 0 6px 16px rgba(0, 0, 0, 0.35);
}

.dialog-head {
    display: flex;
    align-items: center;
    flex: none;
    height: 37px;
    padding: 0 0 0 10px;
    background-color: #fff;
}

.dialog-head h2 {
    flex: 1;
    margin: 0 0 0 6px;
    font: 14px/20px "Open Sans", "Noto Sans", sans-serif;
}

.dialog-head button {
    display: grid;
    place-items: center;
    width: 59px;
    height: 36px;
}

.dialog-body {
    display: flex;
    flex-direction: column;
    flex: 1;
    min-height: 0;
    border-top: 2px solid #808080;
    border-left: 2px solid #808080;
}

.search-bar {
    display: flex;
    align-items: center;
    flex: none;
    height: 49px;
    padding: 0 22px 0 9px;
    border-bottom: 2px solid #a0a0a0;
}

.search-bar label {
    width: 32px;
}

.search-bar input {
    width: 169px;
}

.search {
    justify-content: flex-start;
    gap: 9px;
    width: 74px;
    height: 33px;
    margin-left: 10px;
    padding-left: 5px;
    border: 2px solid #0078d7;
}

.totals {
    gap: 6px;
    width: 161px;
    height: 29px;
    margin: 4px 0 0 auto;
}

.results {
    border-top: 1px solid #000;
    background-color: #fff;
}

.results .mark {
    width: 23px;
}

.results .imei {
    width: 193px;
}

.sorted {
    display: flex;
    align-items: center;
    justify-content: space-between;
    padding-right: 4px;
}

.results .hit {
    background-color: #ff0;
}

.blank {
    flex: 1;
    background-color: #fff;
}

.navigator {
    display: flex;
    gap: 2px;
    flex: none;
    height: 25px;
    padding: 0 3px 0 2px;
    border-bottom: 1px solid #a0a0a0;
    background-color: #fff;
}

.navigator button {
    display: grid;
    place-items: center;
    flex: none;
    width: 20px;
    height: 23px;
    background-color: #f0f0f0;
}

.filler {
    width: 60px;
    background-color: #f0f0f0;
}

.navigator .scroll {
    width: 21px;
    height: 24px;
    border: 1px solid #000;
}

.track {
    display: flex;
    justify-content: flex-end;
    flex: 1;
    background: repeating-conic-gradient(#f0f0f0 0 25%, #fff 0 50%) 0 0 / 2px 2px;
}

.thumb {
    width: 77px;
    height: 24px;
    margin-right: -2px;
    border: 1px solid #000;
    background-color: #f0f0f0;
}

.dialog-foot {
    display: flex;
    justify-content: space-between;
    flex: none;
    height: 44px;
    padding: 3px 0 0 4px;
    margin-top: 2px;
    border-top: 1px solid #a0a0a0;
}

.eb {
    display: flex;
    width: 42px;
    height: 36px;
    padding: 2px 0 0 6px;
    border: 1px solid #a0a0a0;
    color: #000080;
    font: 700 19px/20px "Liberation Serif", serif;
}

.eb .b {
    padding-top: 8px;
}

.close {
    gap: 11px;
    width: 94px;
    height: 30px;
    margin-top: 2px;
    padding-left: 10px;
    border-right: 0;
}

.highlight {
    position: absolute;
    top: 83px;
    right: 2px;
    width: 196px;
    height: 72px;
    border: 4px solid #f00;
    border-radius: 2px;
    pointer-events: none;
}
```
